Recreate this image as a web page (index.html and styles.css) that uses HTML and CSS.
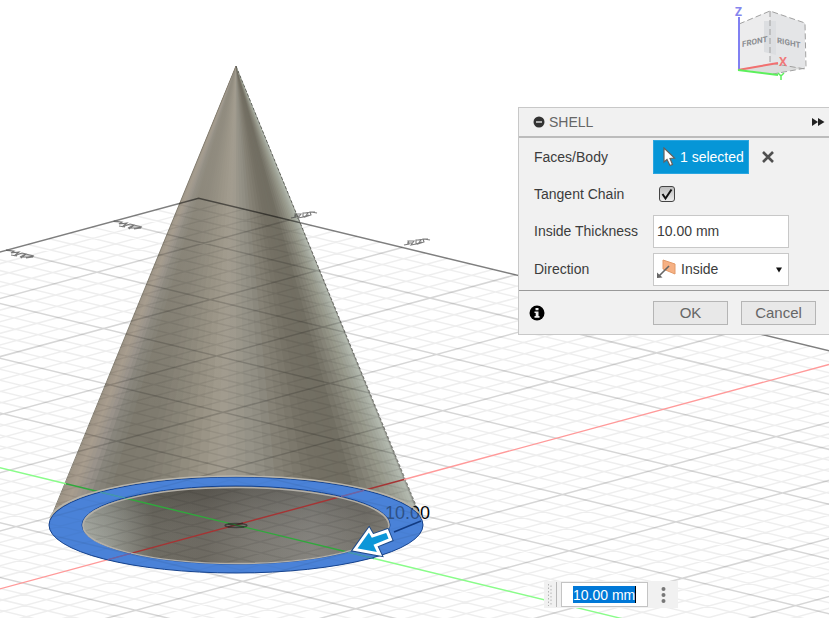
FILE: index.html
```
<!DOCTYPE html>
<html lang="en">
<head>
<meta charset="utf-8">
<title>Shell</title>
<link rel="stylesheet" href="styles.css">
</head>
<body>
<main class="workspace">
  <svg class="scene" viewBox="0 0 829 618" preserveAspectRatio="xMidYMid slice" role="img" aria-label="Cone with shell preview">
    <defs>
      <linearGradient id="cavity">
        <stop offset="0" stop-color="#a5a9a0"/>
        <stop offset=".1" stop-color="#8c8e85"/>
        <stop offset=".23" stop-color="#615e54"/>
        <stop offset=".4" stop-color="#605c53"/>
        <stop offset=".55" stop-color="#716e66"/>
        <stop offset=".75" stop-color="#7b7973"/>
        <stop offset=".92" stop-color="#6b6860"/>
        <stop offset="1" stop-color="#77746b"/>
      </linearGradient>
      <linearGradient id="cavityShade" x1="0" y1="0" x2="0" y2="1">
        <stop offset="0" stop-color="#333" stop-opacity=".25"/>
        <stop offset="1" stop-color="#fff" stop-opacity=".08"/>
      </linearGradient>
      <linearGradient id="tipLight" x1="0" y1="0" x2="0" y2="1">
        <stop offset="0" stop-color="#a39d90" stop-opacity=".55"/>
        <stop offset=".25" stop-color="#a39d90" stop-opacity=".45"/>
        <stop offset=".75" stop-color="#a39d90" stop-opacity="0"/>
      </linearGradient>
      <path id="ring" fill-rule="evenodd" d="M49 525a187 48 0 1 0 374 0a187 48 0 1 0-374 0ZM82 525a154 39 0 1 0 308 0a154 39 0 1 0-308 0Z"/>
    </defs>
    <rect width="829" height="618" fill="#fff"/>
    <g id="facets"></g>
    <path d="M236 66 50 520H236Z" fill="url(#tipLight)"/>
    <path d="M236 66 50 520" stroke="#857f72" fill="none"/>
    <path d="M236 66 422 520" stroke="#33332e" stroke-dasharray="3 2" fill="none" stroke-opacity=".6"/>
    <ellipse cx="236" cy="525" rx="154" ry="39" fill="url(#cavity)"/>
    <ellipse cx="236" cy="525" rx="154" ry="39" fill="url(#cavityShade)"/>
    <use href="#ring" fill="#4a82d8"/>
    <g transform="matrix(21.35 -5.79 22.64 5.48 236 525)" fill="none" stroke="#000">
      <path id="minor" class="hair" stroke-width="1.500" stroke-opacity=".065"/>
      <path id="major" class="hair" stroke-width="1.500" stroke-opacity=".16"/>
      <path class="hair" stroke-width="1.500" stroke-opacity=".5" d="M-29-29H29V29"/>
    </g>
    <g fill="none" stroke-width="1.400">
      <path stroke="#ff9a9a" d="M-10 591.600 108 559.600M404 479.500 829 364.500"/>
      <path stroke="#a53434" d="M108 559.600 404 479.500"/>
      <path stroke="#8afc8a" d="M-10 465.400 66 483.800M374 558.500 640 623"/>
      <path stroke="#30a83c" d="M66 483.800 374 558.500"/>
      <ellipse cx="236" cy="525.500" rx="11" ry="2" stroke="#222" stroke-opacity=".6"/>
      <path stroke="#222" stroke-opacity=".5" d="M228 524l16 3M228 527l15-4"/>
    </g>
    <g fill="none" stroke="#444" stroke-width="1.100" stroke-opacity=".7">
      <path d="M114 221l8 1-3 2 8-1-5 4 8-3 4 1-6 3 8 0 6-1-8-2-5 4M119 226l6 1M134 229l7-1"/>
      <path d="M6 250l8 1-3 2 8-1-5 4 8-3 4 1-6 3 8 0 6-1-8-2-5 4M11 255l6 1M26 258l7-1"/>
      <path d="M291 218l5-1-1-3 6 0-3 4 5-1 0-4 5 0-3 4 6-2-1-3 5 0M294 216l6 0M303 217l6-2M305 213l6-1 6 1"/>
      <path d="M404 245l5-1-1-3 6 0-3 4 5-1 0-4 5 0-3 4 6-2-1-3 5 0M407 243l6 0M416 244l6-2M418 240l6-1 6 1"/>
    </g>
    <text class="dimension" x="385" y="519">10.00</text>
    <use href="#ring" fill="#4a82d8" fill-opacity=".62"/>
    <g fill="none">
      <ellipse cx="236" cy="525" rx="187" ry="48" stroke="#16438e"/>
      <ellipse cx="236" cy="525" rx="154" ry="39" stroke="#16438e"/>
      <ellipse cx="236" cy="525.500" rx="153" ry="38" stroke="#b3afa7" stroke-width="1.500"/>
      <path d="M50 518C58 496 135 476 236 476S414 496 422 518" stroke="#b8b4aa" stroke-width="1.500"/>
      <path d="M100 492 125 498.100M348 552.200 374 558.500" stroke="#4598b5"/>
      <path d="M108 559.600 131 553.400M341 496.600 364 490.400" stroke="#6f62a8"/>
      <path d="M394 532 421 521" stroke="#123b82" stroke-width="1.500"/>
    </g>
    <g stroke-linejoin="miter">
      <path d="M355 549.500 369 530 372.500 536 387 531 390.500 539.500 375.500 545.500 379.500 554Z" fill="none" stroke="#1d4a8a" stroke-width="5"/>
      <path d="M355 549.500 369 530 372.500 536 387 531 390.500 539.500 375.500 545.500 379.500 554Z" fill="#0c96d8" stroke="#fff" stroke-width="3"/>
    </g>
  </svg>

  <svg class="viewcube" viewBox="0 0 84 84" role="img" aria-label="View cube">
    <path d="M9 24 40 11V63L9 69Z" fill="#ececed"/>
    <path d="M40 11 75 23V68L40 63Z" fill="#e4e5e7"/>
    <path d="M9 69 40 63 75 68 43 74Z" fill="#dcdddd"/>
    <path d="M34 21H46V55L34 52Z" fill="#dcdee1"/>
    <path d="M9 24 40 11 75 23 76 68 43 74M40 11V63L75 69" fill="none" stroke="#a0a0a0" stroke-dasharray="6 3"/>
    <text class="face" transform="translate(12 47) skewY(-12)">FRONT</text>
    <text class="face" transform="translate(47 43) skewY(12)">RIGHT</text>
    <path d="M9 70V17" stroke="#8080f2" stroke-width="2"/>
    <path d="M8 70 48 63" stroke="#f27070" stroke-width="2"/>
    <path d="M8 70 48 75" stroke="#5cf05c" stroke-width="2"/>
    <text class="axis axis-z" x="5" y="16">Z</text>
    <text class="axis axis-x" x="49" y="66">X</text>
    <path d="M48 73 51 76 54 73M51 76V80" fill="none" stroke="#5cf05c" stroke-width="1.500"/>
  </svg>

  <form class="panel">
    <header class="panel-head">
      <button type="button" class="bare" aria-label="Collapse">
        <svg width="12" height="12" viewBox="0 0 12 12"><circle cx="6" cy="6" r="5.500" fill="#333"/><path d="M3 6H9" stroke="#ddd" stroke-width="1.500"/></svg>
      </button>
      <h1>SHELL</h1>
      <button type="button" class="bare expand" aria-label="Expand">
        <svg width="14" height="10" viewBox="0 0 14 10"><path d="M1 1 7 5V1L13.500 5 7 9V5L1 9Z" fill="#222"/></svg>
      </button>
    </header>
    <div class="fields">
      <span class="name">Faces/Body</span>
      <div class="control">
        <button type="button" class="pick">
          <svg width="14" height="20" viewBox="0 0 14 20"><path d="M2 1V15L5 12.500 8 18.500 10.500 17.500 8 11.500 12.500 11Z" fill="#fff" stroke="#66605c" stroke-width="1.200"/></svg>
          <span>1 selected</span>
        </button>
        <button type="button" class="bare clear" aria-label="Clear selection">
          <svg width="12" height="12" viewBox="0 0 12 12"><path d="M1 1 11 11M11 1 1 11" stroke="#505050" stroke-width="2.600"/></svg>
        </button>
      </div>
      <label class="name" for="tangent">Tangent Chain</label>
      <div class="control">
        <span class="tick">
          <input id="tangent" type="checkbox" checked>
          <svg width="16" height="16" viewBox="0 0 16 16"><path d="M3.500 8 6.500 12.500 12.500 3.500" fill="none" stroke="#111" stroke-width="2"/></svg>
        </span>
      </div>
      <label class="name" for="thickness">Inside Thickness</label>
      <div class="control"><input id="thickness" class="box" type="text" value="10.00 mm"></div>
      <label class="name" for="direction">Direction</label>
      <div class="control">
        <span class="choice">
          <svg class="choice-icon" width="20" height="20" viewBox="0 0 20 20"><path d="M7 1 19 5V15L7 10Z" fill="#f6b184" stroke="#e39a69"/><path d="M13 7 3 17" stroke="#666" stroke-width="1.600"/><path d="M1 19V13.500L6.500 18.500Z" fill="#666"/></svg>
          <select id="direction" class="box"><option>Inside</option><option>Outside</option><option>Both</option></select>
          <svg class="choice-arrow" width="8" height="6" viewBox="0 0 8 6"><path d="M1 0.500H7L4 5.500Z" fill="#111"/></svg>
        </span>
      </div>
    </div>
    <footer class="panel-foot">
      <button type="button" class="bare" aria-label="Information">
        <svg width="16" height="16" viewBox="0 0 16 16"><circle cx="8" cy="8" r="7.500" fill="#000"/><path d="M6.500 3H9.500V5.200H6.500ZM5.500 6.500H9.500V11H10.500V12.700H5.500V11H6.700V8H5.500Z" fill="#eee"/></svg>
      </button>
      <div class="actions">
        <button type="submit" class="action">OK</button>
        <button type="button" class="action">Cancel</button>
      </div>
    </footer>
  </form>

  <div class="floating">
    <svg class="grip" width="5" height="22" viewBox="0 0 5 22"><path d="M1.500 0V22" stroke="#b5b5b5" stroke-dasharray="1.500 2"/><path d="M4 1.500V22" stroke="#b5b5b5" stroke-dasharray="1.500 2"/></svg>
    <span class="divider"></span>
    <span class="entry"><input type="text" value="10.00 mm" aria-label="Thickness"></span>
    <button type="button" class="bare" aria-label="More options">
      <svg width="5" height="18" viewBox="0 0 5 18" fill="#777"><circle cx="2.500" cy="3" r="2"/><circle cx="2.500" cy="9" r="2"/><circle cx="2.500" cy="15" r="2"/></svg>
    </button>
  </div>
</main>
<script src="scene.js"></script>
</body>
</html>
```
FILE: styles.css
```
* { box-sizing: border-box; }

body {
  margin: 0;
  background: #fff;
  color: #3c3c3c;
  font: 14px/18px "Liberation Sans", Arial, sans-serif;
}

button, input, select { font: inherit; color: inherit; }

.workspace {
  position: relative;
  height: 100vh;
  overflow: hidden;
}

.scene { display: block; width: 100%; height: 100%; }
.hair { vector-effect: non-scaling-stroke; }
.dimension { font-size: 18px; fill: #000; }

.viewcube {
  position: absolute;
  top: 0;
  right: 15px;
  width: 84px;
  height: 84px;
}
.face {
  font: 700 8px Roboto, "Liberation Sans", sans-serif;
  fill: #8b8e92;
}
.axis { font: 700 12px "Open Sans", sans-serif; }
.axis-z { fill: #8585ee; }
.axis-x { fill: #f07878; }

.bare {
  display: flex;
  padding: 0;
  border: 0;
  background: none;
}

.panel {
  position: absolute;
  top: 107px;
  right: 0;
  width: 311px;
  background: #f1f1f1;
  border: 1px solid #c8c8c8;
  border-right: 0;
}

.panel-head {
  display: flex;
  align-items: center;
  gap: 4px;
  height: 30px;
  padding: 0 4px 0 14px;
  border-bottom: 2px solid #bcbcbc;
}
.panel-head h1 {
  margin: 0;
  font-size: 14px;
  font-weight: 400;
  color: #666;
}
.expand { margin-left: auto; }

.fields {
  display: grid;
  grid-template-columns: 119px 1fr;
  grid-template-rows: 37px 37px 38px 38px;
  align-items: center;
  padding: 0 0 2px 15px;
}
.control { display: flex; align-items: center; }

.pick {
  display: flex;
  align-items: center;
  gap: 4px;
  width: 96px;
  height: 34px;
  padding: 0 0 0 8px;
  border: 1px solid #2ba6e0;
  background: #0696d7;
  color: #fff;
  white-space: nowrap;
}
.clear { margin-left: 13px; }

.tick {
  position: relative;
  display: flex;
  margin-left: 6px;
}
.tick input {
  appearance: none;
  width: 16px;
  height: 16px;
  margin: 0;
  border: 1px solid #444;
  border-radius: 3px;
  background: linear-gradient(#bdbdbd, #ececec);
}
.tick svg { position: absolute; inset: 0; pointer-events: none; }

.box {
  width: 136px;
  height: 33px;
  padding: 0 3px;
  border: 1px solid #c8c8c8;
  border-radius: 0;
  background: #fff;
}

.choice { position: relative; display: flex; }
.choice select { appearance: none; padding-left: 27px; }
.choice-icon { position: absolute; left: 3px; top: 6px; pointer-events: none; }
.choice-arrow { position: absolute; right: 6px; top: 14px; pointer-events: none; }

.panel-foot {
  display: flex;
  align-items: center;
  justify-content: space-between;
  height: 44px;
  padding: 0 13px 0 10px;
  border-top: 1px solid #999;
}
.actions { display: flex; gap: 13px; }
.action {
  width: 75px;
  height: 24px;
  padding: 0;
  border: 1px solid #b5b5b5;
  background: #e8e8e8;
  color: #666;
  font-size: 15px;
}

.floating {
  position: absolute;
  right: 151px;
  bottom: 10px;
  display: flex;
  align-items: center;
  width: 134px;
  height: 27px;
  padding: 0 12px 0 3px;
  background: #f1f1f1;
}
.divider {
  width: 1px;
  height: 25px;
  margin: 0 4px;
  background: #b8b8b8;
}
.entry {
  display: flex;
  align-items: center;
  width: 87px;
  height: 25px;
  margin-right: 13px;
  padding-left: 11px;
  border: 1px solid #c4c4c4;
  background: #fff;
}
.entry input {
  width: 63px;
  height: 17px;
  padding: 0;
  border: 0;
  border-right: 1px solid #000;
  background: #0078d7;
  color: #fff;
}
```
FILE: scene.js
```
// Ground grid: one line per cell, a heavier one every fifth; the axes and the border are drawn apart.
const HALF = 29;
let minor = "";
let major = "";
for (let n = 1 - HALF; n < HALF; n++) {
  if (n === 0) continue;
  const pair = `M${-HALF} ${n}H${HALF}M${n} ${-HALF}V${HALF}`;
  if (n % 5 === 0) major += pair;
  else minor += pair;
}
document.getElementById("minor").setAttribute("d", minor);
document.getElementById("major").setAttribute("d", major);

// Cone side: triangles that fan out from the apex, by position across the base.
const SHADES = [
  [-1, 156, 146, 132], [-0.9, 168, 157, 142], [-0.81, 151, 145, 138],
  [-0.76, 136, 133, 124], [-0.65, 126, 122, 110], [-0.5, 127, 123, 111],
  [-0.35, 139, 134, 121], [-0.23, 150, 144, 130], [-0.1, 162, 156, 142],
  [0, 156, 152, 140], [0.13, 145, 142, 131], [0.27, 130, 126, 114],
  [0.42, 116, 112, 100], [0.6, 113, 110, 98], [0.7, 129, 127, 115],
  [0.81, 150, 151, 137], [0.9, 165, 169, 158], [0.965, 181, 187, 177],
  [1, 150, 153, 145]
];
function shade(t) {
  let i = 1;
  while (i < SHADES.length - 1 && SHADES[i][0] < t) i++;
  const a = SHADES[i - 1];
  const b = SHADES[i];
  const k = (t - a[0]) / (b[0] - a[0]);
  const c = [1, 2, 3].map(j => Math.round(a[j] + (b[j] - a[j]) * k));
  return `rgb(${c.join(",")})`;
}
// Each facet reaches under the ones painted after it, so no seam shows between them.
const STEPS = 60;
const group = document.getElementById("facets");
const edge = s => -Math.cos(Math.PI * s / STEPS);
const point = s => {
  const t = edge(s);
  return `${236 + 186.5 * t} ${525 - 48 * Math.sqrt(Math.max(0, 1 - t * t))}`;
};
for (let s = 0; s < STEPS; s++) {
  let d = "M236 66";
  for (let k = s; k <= Math.min(STEPS, s + 6); k++) d += `L${point(k)}`;
  const facet = document.createElementNS("http://www.w3.org/2000/svg", "path");
  facet.setAttribute("d", d + "Z");
  facet.setAttribute("fill", shade((edge(s) + edge(s + 1)) / 2));
  group.append(facet);
}
```
